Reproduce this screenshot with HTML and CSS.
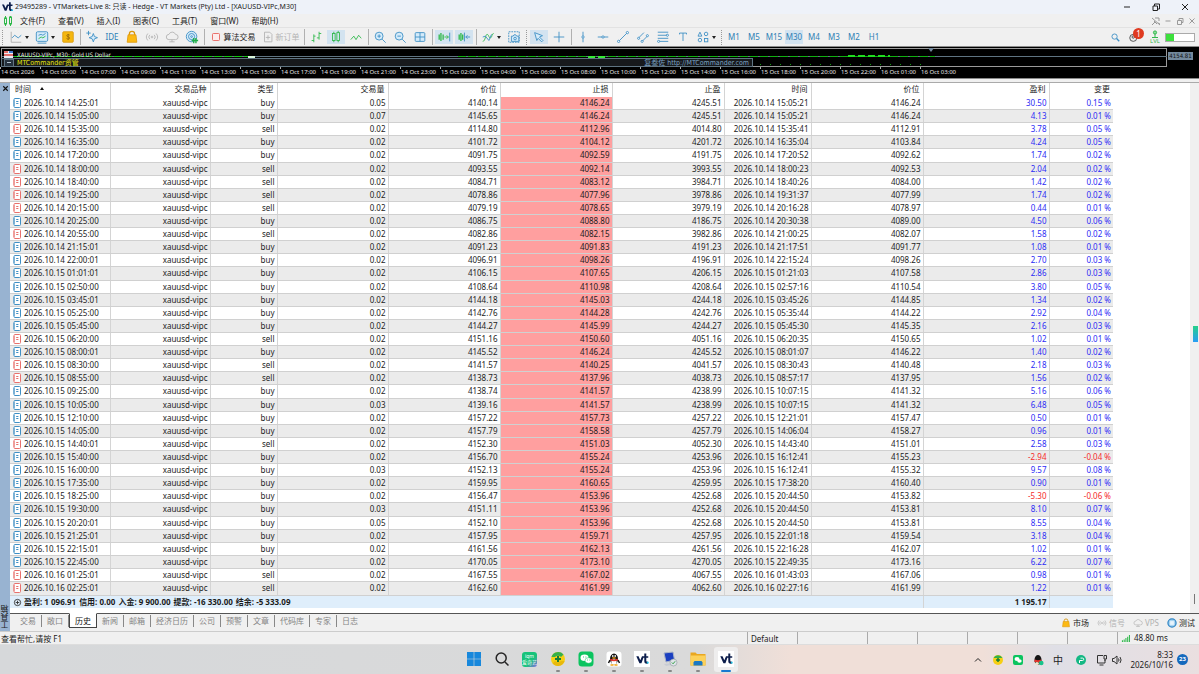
FILE: index.html
```html
<!DOCTYPE html>
<html lang="zh-CN">
<head>
<meta charset="utf-8">
<title>VTMarkets-Live 8</title>
<link rel="stylesheet" href="styles.css">
</head>
<body>
<svg class="defs" aria-hidden="true">
  <symbol id="doc" viewBox="0 0 8 10"><rect x="1" y=".5" width="6.500" height="9" rx="1" fill="#fff" stroke="currentColor"/><path d="M1 2v6" stroke="currentColor" stroke-width="1.400" opacity=".5"/><path d="M3.200 3.500h2.200M3.200 5.500h2.200" stroke="currentColor"/></symbol>
  <symbol id="bag" viewBox="0 0 16 16"><path d="M5 7V4.500a3 3 0 0 1 6 0V7" fill="none" stroke="#d9960c" stroke-width="1.400"/><path d="M3.500 5.500h9l1 8.500h-11z" fill="#fcb913" stroke="#e09c10"/></symbol>
  <symbol id="signal" viewBox="0 0 16 16"><g fill="none" stroke="currentColor"><circle cx="8" cy="8" r="1"/><path d="M5.500 5.500a3.500 3.500 0 0 0 0 5M10.500 5.500a3.500 3.500 0 0 1 0 5M3.300 4a6 6 0 0 0 0 8M12.700 4a6 6 0 0 1 0 8"/></g></symbol>
  <symbol id="cloud" viewBox="0 0 16 16"><path d="M4.500 11a3 3 0 0 1 0-6 4 4 0 0 1 7.500 0 3 3 0 0 1 0 6zM8 11v2.500M5 13.500h6" fill="none" stroke="currentColor"/></symbol>
  <symbol id="vt" viewBox="0 0 24 24"><path d="M2 7h4l3 7 3-7h4V2.500h3.500V7H23v3h-3.500v5c0 1.500 1 2 3 1.600V20c-4.500.800-6.500-.800-6.500-4.500V10h-1.500L11 19.500H7.500z" fill="#0d1e4c"/><path d="M20.500 17h3.300v3h-3.300z" fill="#19c3e6"/></symbol>
</svg>

<header class="titlebar">
  <svg class="i12"><use href="#vt"/></svg>
  <h1>29495289 - VTMarkets-Live 8: 只读 - Hedge - VT Markets (Pty) Ltd - [XAUUSD-VIPc,M30]</h1>
  <div class="winctl">
    <button aria-label="最小化"><svg viewBox="0 0 10 10"><path d="M2 5h6"/></svg></button>
    <button aria-label="还原"><svg viewBox="0 0 10 10"><path d="M2 4h4.500v4.500H2zM3.500 4V2h5v5h-2"/></svg></button>
    <button aria-label="关闭"><svg viewBox="0 0 10 10"><path d="M2 2l6 6M8 2l-6 6"/></svg></button>
  </div>
</header>

<nav class="menubar">
  <svg class="i12" viewBox="0 0 12 12"><g fill="none" stroke="#2eb84a"><path d="M3.500 1v2M3.500 9v2M8.500 1v1M8.500 9v2"/><rect x="2.500" y="3" width="2" height="6"/><rect x="7.500" y="2" width="2" height="7"/></g></svg>
  <button>文件(F)</button><button>查看(V)</button><button>插入(I)</button><button>图表(C)</button><button>工具(T)</button><button>窗口(W)</button><button>帮助(H)</button>
  <div class="childctl">
    <button aria-label="取消固定"><svg viewBox="0 0 10 10"><path d="M1 2l8 7M1 9l3-3M4 2h4v3M3 5l3 3M7 7l2 1"/></svg></button>
    <button aria-label="最小化图表"><svg viewBox="0 0 10 10"><path d="M2.500 5h5"/></svg></button>
    <button aria-label="还原图表"><svg viewBox="0 0 10 10"><path d="M2.500 4.500h4v4h-4zM4 4V2.500h4v4h-1"/></svg></button>
    <button aria-label="关闭图表"><svg viewBox="0 0 10 10"><path d="M2.500 2.500l5 5M7.500 2.500l-5 5"/></svg></button>
  </div>
</nav>

<div class="toolbar">
  <i class="grip lead"></i>
  <button class="combo" aria-label="线形"><svg viewBox="0 0 16 16"><path d="M2.500 2v12H14" stroke="#aaa"/><path d="M3.500 9l3-3 4 3 3.500-3"/></svg><i class="caret"></i></button>
  <button class="combo" aria-label="图表"><svg viewBox="0 0 16 16"><rect x="1.500" y="2" width="13" height="11" rx="1.500" fill="#d5ebfa"/><path d="M4 6l3-1 2 1 3-2M3 15h10"/><path d="M4 10l3-2 2 1 3-2" stroke="#2eb84a"/></svg><i class="caret"></i></button>
  <button aria-label="报价"><svg viewBox="0 0 16 16"><rect x="2" y="2" width="12" height="12" rx="1" fill="#f5b70f" stroke="#d99b12"/><path d="M10 6c-.500-1-3.500-1-3.500.500 0 1.700 3.500 1 3.500 2.700 0 1.500-3.200 1.500-3.800.300M8.200 4.500v7" stroke="#8c5f0a" stroke-width=".8"/></svg></button>
  <i class="sep"></i>
  <button aria-label="向导"><svg viewBox="0 0 16 16"><path d="M9.500 4l1.300 3.500 3.500 1.300-3.500 1.300-1.300 3.500-1.300-3.500-3.500-1.300 3.500-1.300z" fill="#d5ebfa"/><path d="M4 1v5M1.500 3.500h5"/></svg></button>
  <button class="ide">IDE</button>
  <button aria-label="市场"><svg><use href="#bag"/></svg></button>
  <button class="off" aria-label="信号"><svg><use href="#signal"/></svg></button>
  <button class="off" aria-label="VPS"><svg><use href="#cloud"/></svg></button>
  <button aria-label="社区"><svg viewBox="0 0 16 16"><circle cx="7.500" cy="7.500" r="6" fill="#d5ebfa"/><circle cx="7.500" cy="7.500" r="3.500"/><circle cx="7.500" cy="7.500" r="1"/><path d="M10 9v6M7.500 12h7.500M12.500 9v6" stroke="#1fae48" stroke-width="1.600"/></svg></button>
  <i class="sep"></i>
  <button class="wide"><svg viewBox="0 0 16 16"><rect x="4" y="4" width="8" height="8" rx="1" stroke="#e8605a" fill="#fdecec"/></svg>算法交易</button>
  <button class="wide off"><svg viewBox="0 0 16 16"><path d="M4 2.500h6l2.500 2.500v8.500H4zM8 6v5M5.500 8.500h5" stroke="#b4b4b4"/></svg>新订单</button>
  <i class="sep"></i>
  <button aria-label="柱状图"><svg viewBox="0 0 16 16" class="g"><path d="M5.500 5v9M3 12h2.500M5.500 7h2M11.500 2v9M9 9h2.500M11.500 4H14"/></svg></button>
  <button class="on" aria-label="蜡烛图"><svg viewBox="0 0 16 16" class="g"><path d="M5.500 2v2M5.500 12v2M10.500 1v2M10.500 12v2"/><rect x="4" y="4" width="3" height="8"/><rect x="9" y="3" width="3" height="9"/></svg></button>
  <button aria-label="折线图"><svg viewBox="0 0 16 16" class="g"><path d="M2 11l3.500-4 2.500 4 3-5 3 3.500"/></svg></button>
  <i class="sep"></i>
  <button aria-label="放大"><svg viewBox="0 0 16 16"><circle cx="7" cy="7" r="4.500" fill="#d5ebfa"/><path d="M10.500 10.500l4 4M5 7h4M7 5v4"/></svg></button>
  <button aria-label="缩小"><svg viewBox="0 0 16 16"><circle cx="7" cy="7" r="4.500" fill="#d5ebfa"/><path d="M10.500 10.500l4 4M5 7h4"/></svg></button>
  <button aria-label="平铺"><svg viewBox="0 0 16 16"><rect x="2.500" y="3" width="11" height="10" rx="1" fill="#d5ebfa"/><path d="M8 3v10M2.500 8h11"/></svg></button>
  <i class="sep"></i>
  <button class="on" aria-label="自动滚动"><svg viewBox="0 0 16 16"><path d="M2.500 5v6M4.500 3.500v9M7 5v6" stroke="#2eb84a" stroke-width="1.500"/><path d="M8.500 8H13M11 6l2 2-2 2" stroke="#2eb84a"/><path d="M14.500 3v10"/></svg></button>
  <button class="on" aria-label="图表平移"><svg viewBox="0 0 16 16"><path d="M2.500 5v6M4.500 3.500v9M6.500 5v6" stroke="#2eb84a" stroke-width="1.500"/><path d="M8.500 3v10M15 8h-5M12 6l-2 2 2 2"/></svg></button>
  <i class="sep"></i>
  <button class="combo" aria-label="指标"><svg viewBox="0 0 16 16"><path d="M2 13c3 0 3-8 5-8s2 5 4 4 1-5 3.500-5" stroke="#2eb84a"/><path d="M2 8l3-1 4 5 3-7"/></svg><i class="caret"></i></button>
  <button aria-label="截图"><svg viewBox="0 0 16 16"><rect x="2" y="2" width="12" height="12" stroke-dasharray="2 1"/><path d="M5 7h2l1-1.500h2L11 7h2.500v6H5z" fill="#d5ebfa"/><circle cx="9.200" cy="9.800" r="1.500"/></svg></button>
  <i class="grip"></i>
  <button class="on" aria-label="光标"><svg viewBox="0 0 16 16"><path d="M3 3l9 3.500-3.500 1.500 4 4-1.500 1.500-4-4L5.500 12z" fill="#d5ebfa"/></svg></button>
  <button aria-label="十字线"><svg viewBox="0 0 16 16"><path d="M8 2v12M2 8h12"/></svg></button>
  <i class="sep"></i>
  <button aria-label="垂直线"><svg viewBox="0 0 16 16"><path d="M8 2v12"/><circle cx="8" cy="8" r="1.300" fill="#fff"/></svg></button>
  <button aria-label="水平线"><svg viewBox="0 0 16 16"><path d="M2 8h12"/><circle cx="8" cy="8" r="1.300" fill="#fff"/></svg></button>
  <button aria-label="趋势线"><svg viewBox="0 0 16 16"><path d="M3 13L13 3"/><circle cx="3" cy="13" r="1.300" fill="#fff"/><circle cx="13" cy="3" r="1.300" fill="#fff"/></svg></button>
  <button aria-label="通道"><svg viewBox="0 0 16 16"><path d="M3 9l6-6M7 13l6-6"/><circle cx="3" cy="9.500" r="1.200" fill="#fff"/><circle cx="7" cy="13" r="1.200" fill="#fff"/><circle cx="13" cy="6.500" r="1.200" fill="#fff"/></svg></button>
  <button aria-label="斐波那契"><svg viewBox="0 0 16 16"><path d="M2 2.500h12M2 6h12M2 9.500h12M2 13h12"/><circle cx="3" cy="13" r="1.200" fill="#fff"/><circle cx="13" cy="6" r="1.200" fill="#fff"/></svg></button>
  <button aria-label="文本"><svg viewBox="0 0 16 16"><path d="M4 5V3.500h8V5M8 3.500v9"/></svg></button>
  <button class="combo" aria-label="图形"><svg viewBox="0 0 16 16"><path d="M4.500 2.500L6.700 7H2.300z"/><circle cx="11.500" cy="4.500" r="2"/><circle cx="4.500" cy="11.500" r="2"/><rect x="9.700" y="9.700" width="3.800" height="3.800"/></svg><i class="caret"></i></button>
  <i class="grip"></i>
  <button class="tf">M1</button><button class="tf">M5</button><button class="tf">M15</button><button class="tf on">M30</button><button class="tf">M4</button><button class="tf">M3</button><button class="tf">M2</button><button class="tf">H1</button>
  <div class="right">
    <button aria-label="搜索"><svg viewBox="0 0 16 16"><circle cx="7.500" cy="7.500" r="3"/><path d="M9.800 9.800l3 3" stroke-width="1.500"/></svg></button>
    <button class="user" aria-label="账户"><svg viewBox="0 0 16 16"><circle cx="6" cy="9" r="4" stroke="#444"/><circle cx="6" cy="8" r="1.400" stroke="#444"/></svg><b class="badge">1</b></button>
    <button class="lvl" aria-label="LVL"><svg viewBox="0 0 12 8"><circle cx="6" cy="2.500" r="1.600" fill="#8bdc9b" stroke="#2eb84a"/><path d="M6 4v3.500M3 7.500h6" stroke="#2eb84a"/></svg><span>LVL</span></button>
    <div class="meter"><i></i></div>
  </div>
</div>

<section class="chart">
  <svg class="plot" aria-hidden="true">
    <rect x="1.500" y="1.500" width="1165" height="18" fill="none" stroke="#9a9a9a"/>
    <rect x="1.500" y="11.500" width="751" height="8" fill="#17191c" stroke="#5f7482"/>
    <path d="M2 9.500h1165" stroke="#5f7482"/>
    <path d="M4 9.500h246" stroke="#10c810" stroke-dasharray="8 2"/>
    <path d="M248 10h7" stroke="#d9f5d9" stroke-width="2"/>
    <path d="M458 9.500h240" stroke="#10b010" stroke-dasharray="8 2"/>
    <path d="M588 10h18" stroke="#35e835" stroke-width="2" stroke-dasharray="7 3"/>
    <path d="M690 9.500h245" stroke="#10b010" stroke-dasharray="8 2"/>
    <path d="M848 9h42" stroke="#20dc20" stroke-width="2" stroke-dasharray="7 3"/>
    <path d="M760 17.500h162" stroke="#0fa00f" stroke-dasharray="1 9"/>
    <path d="M928 1h6l-3 4z" fill="#73899d"/>
    <rect x="4" y="4" width="9" height="7" fill="#e9eef5"/><path d="M4 5h4M4 8h9" stroke="#e0453f" stroke-width="1.500"/><path d="M9 5h4" stroke="#3f74c9" stroke-width="2"/>
    <rect x="4.500" y="12.500" width="9" height="7" fill="#26323e" stroke="#5f7482"/><path d="M7 15.500h4" stroke="#b4c4d2"/>
  </svg>
  <div class="pane">
    <div class="symbol">XAUUSD-VIPc, M30: Gold US Dollar</div>
    <div class="sub"><span class="ea">MTCommander资管</span><span class="link">复叁佐 http://MTCommander.com</span></div>
    <span class="price">4154.81</span>
  </div>
  <div class="axis" id="axis"></div>
</section>

<main class="toolbox">
  <aside class="side"><button aria-label="关闭工具箱"><svg viewBox="0 0 8 8"><path d="M2 2l4 4M6 2L2 6"/></svg></button><span>工具箱</span></aside>
  <div class="panel">
    <div class="tablewrap">
      <table>
        <colgroup><col class="w100"><col class="w100"><col class="w67"><col class="w111"><col class="w112"><col class="w112"><col class="w112"><col class="w87"><col class="w112"><col class="w126"><col class="w63"></colgroup>
        <thead><tr><th class="first">时间 <i class="up"></i></th><th>交易品种</th><th>类型</th><th>交易量</th><th>价位</th><th>止损</th><th>止盈</th><th>时间</th><th>价位</th><th>盈利</th><th>变更</th></tr></thead>
        <tbody id="rows"></tbody>
        <tfoot><tr><td colspan="9" class="sum"><svg class="plus" viewBox="0 0 10 10"><circle cx="5" cy="5" r="3.500"/><path d="M5 3v4M3 5h4"/></svg><span>盈利: 1 096.91</span><span>信用: 0.00</span><span>入金: 9 900.00</span><span>提款: -16 330.00</span><span>结余: -5 333.09</span></td><td class="total">1 195.17</td><td></td></tr></tfoot>
      </table>
      <div class="scroll"><i class="marker"></i><i class="thumb"></i></div>
    </div>
    <nav class="tabs">
      <button>交易</button><button>敞口</button><button class="active">历史</button><button>新闻</button><button>邮箱</button><button>经济日历</button><button>公司</button><button>预警</button><button>文章</button><button>代码库</button><button>专家</button><button>日志</button>
      <div class="services">
        <button class="strong"><svg><use href="#bag"/></svg>市场</button>
        <button><svg><use href="#signal"/></svg>信号</button>
        <button><svg><use href="#cloud"/></svg>VPS</button>
        <button class="strong"><svg viewBox="0 0 16 16"><circle cx="8" cy="8" r="6.500" fill="#a9d4f0" stroke="#2f86c5" stroke-width="2"/><rect x="5" y="5" width="6" height="6" fill="#e8f4fc"/></svg>测试</button>
      </div>
    </nav>
  </div>
</main>

<footer class="status">
  <span class="help">查看帮忙,请按 F1</span>
  <span class="profile">Default</span><span class="c1"></span><span></span><span></span><span></span><span></span><span></span>
  <span class="ping"><svg viewBox="0 0 10 8"><path d="M1.500 6v2M3.500 5v3M5.500 3.500V8M7.500 2v6M9.500 0v8" stroke="#2eb84a" stroke-width="1.200"/></svg>48.80 ms</span>
</footer>

<div class="taskbar">
  <div class="apps">
    <button aria-label="开始"><svg viewBox="0 0 16 16"><path d="M1 1h6.700v6.700H1zM8.300 1H15v6.700H8.300zM1 8.300h6.700V15H1zM8.300 8.300H15V15H8.300z" fill="#1888dc"/></svg></button>
    <button aria-label="搜索"><svg viewBox="0 0 16 16"><g fill="none" stroke="#262626" stroke-width="1.500"><circle cx="7.200" cy="7" r="5"/><path d="M11 11l3.500 3.500"/></g></svg></button>
    <button class="brand" aria-label="爱奇艺"><span>iqm<br>爱奇艺</span></button>
    <button class="run" aria-label="安全"><svg viewBox="0 0 16 16"><circle cx="8" cy="8" r="7" fill="#f6cf14"/><path d="M1.500 6a7 7 0 0 1 12-2.500L11 6A4 4 0 0 0 5 6z" fill="#35b04a"/><path d="M14.500 10a7 7 0 0 1-12 2.500L5 10a4 4 0 0 0 6 0z" fill="#e8b90c"/><path d="M8 5v6M5 8h6" stroke="#167d34" stroke-width="2"/></svg></button>
    <button class="run" aria-label="微信"><svg viewBox="0 0 16 16"><rect x=".5" y=".5" width="15" height="15" rx="3.500" fill="#0bc45f"/><ellipse cx="6.500" cy="6.800" rx="4" ry="3.300" fill="#fff"/><ellipse cx="10.500" cy="9.500" rx="3.500" ry="2.800" fill="#fff" stroke="#0bc45f" stroke-width=".5"/><path d="M5 6h.8M7.500 6h.8M9.300 9h.7M11.500 9h.7" stroke="#0bc45f"/></svg></button>
    <button class="run" aria-label="QQ"><svg viewBox="0 0 16 16"><rect x=".5" y=".5" width="15" height="15" rx="3" fill="#fff"/><ellipse cx="8" cy="8" rx="4" ry="5.500" fill="#161616"/><path d="M4 9l-1.500 3M12 9l1.500 3" stroke="#161616" stroke-width="1.500"/><ellipse cx="8" cy="11" rx="2.700" ry="2.800" fill="#fff"/><ellipse cx="6.800" cy="5" rx=".8" ry="1" fill="#fff"/><ellipse cx="9.200" cy="5" rx=".8" ry="1" fill="#fff"/><ellipse cx="8" cy="7" rx="2" ry=".7" fill="#f6a616"/><path d="M4.200 8.500c2.500 1.200 5 1.200 7.600 0" stroke="#e3322c" stroke-width="1.500" fill="none"/><path d="M4.500 14h3M8.500 14h3" stroke="#f6a616" stroke-width="1.400"/></svg></button>
    <button class="run" aria-label="VT"><svg class="white" viewBox="-2 -2 28 28"><use href="#vt" width="24" height="24"/></svg></button>
    <button class="run" aria-label="远程"><svg viewBox="0 0 16 16"><path d="M2 2l9-1 1.500 8L4 11z" fill="#1b3fc0" stroke="#a9b4c8"/><path d="M2 13l8-1 2 1.500-8 1.500z" fill="#c8ccd4"/><circle cx="11.500" cy="11.500" r="3.500" fill="#dfe4e8" stroke="#8f979f" stroke-width=".6"/><path d="M9.800 11.500l1.300 1.300 2-2.500" stroke="#35a048" fill="none"/></svg></button>
    <button class="run" aria-label="资源管理器"><svg viewBox="0 0 16 16"><path d="M.5 1.500h5L7 3h8.500v11.500H.5z" fill="#e9a720"/><path d="M.5 4.500h15v10H.5z" fill="#fcd15a"/><path d="M3.500 14.500v-3l1-1.500h7l1 1.500v3z" fill="#1b79c4"/></svg></button>
    <button class="run current" aria-label="VT Markets"><svg class="white" viewBox="-2 -2 28 28"><use href="#vt" width="24" height="24"/></svg></button>
  </div>
  <div class="tray">
    <button aria-label="显示隐藏图标"><svg viewBox="0 0 12 12"><path d="M3 7.500l3-3 3 3" fill="none" stroke="#222"/></svg></button>
    <button aria-label="安全卫士"><svg viewBox="0 0 12 12"><circle cx="6" cy="6" r="5" fill="#f6cf14"/><path d="M1.500 4a5 5 0 0 1 9 0z" fill="#35b04a"/><path d="M6 4v4M4 6h4" stroke="#167d34" stroke-width="1.500"/></svg></button>
    <button aria-label="微信"><svg viewBox="0 0 12 12"><rect x="1" y="1" width="10" height="10" rx="2" fill="#0bc45f"/><ellipse cx="5" cy="5" rx="2.500" ry="2" fill="#fff"/><ellipse cx="7.500" cy="7" rx="2.200" ry="1.800" fill="#fff"/></svg></button>
    <button aria-label="QQ"><svg viewBox="0 0 12 12"><ellipse cx="6" cy="6" rx="3.500" ry="5" fill="#161616"/><path d="M2.500 6.500c2 1 5 1 7 0" stroke="#e3322c" stroke-width="2" fill="none"/><ellipse cx="5" cy="9.500" rx="2" ry="1.500" fill="#f3e3c8"/><circle cx="9.300" cy="9" r="2.300" fill="#19c38b"/></svg></button>
    <button class="ime">中</button>
    <button class="boost" aria-label="加速器"><svg viewBox="0 0 12 12"><circle cx="6" cy="6" r="5" fill="#14b884"/><path d="M4.500 9V6.500h3a1.200 1.200 0 0 0 0-2.400H5.500" stroke="#fff" fill="none"/></svg></button>
    <button class="net" aria-label="网络和音量"><svg viewBox="0 0 28 12"><g fill="none" stroke="#333"><path d="M8 1.500H2.500v7.500H10V6M4.500 11h4M9 1.500h2.500V5H9zM10 5v2"/><path d="M17.500 4.500h1.500l3-2.500v8l-3-2.500h-1.500zM23.500 4.500q1 1.500 0 3M25 3q2.200 3 0 6"/></g></svg></button>
    <div class="clock"><span>8:33</span><span>2026/10/16</span></div>
    <b class="count">23</b>
  </div>
</div>
<script src="script.js"></script>
</body>
</html>
```

FILE: styles.css
```css
* { box-sizing: border-box; }
body {
  margin: 0;
  min-height: 100vh;
  display: flex;
  flex-direction: column;
  font: 8px/12px "Noto Sans", "Noto Sans CJK SC", sans-serif;
  color: #1c1c1c;
  background: #f0f0f0;
  overflow: hidden;
}
button { border: 0; padding: 0; margin: 0; background: none; font: inherit; color: inherit; white-space: nowrap; }
svg { display: block; flex: none; }
.defs { position: absolute; width: 0; height: 0; }
.i12 { width: 12px; height: 12px; }

.titlebar { display: flex; align-items: center; height: 14px; padding: 0 0 0 1px; gap: 2px; background: #eef2f9; }
.titlebar h1 { margin: 0; font-size: 7px; line-height: 14px; font-weight: 400; white-space: nowrap; }
.winctl { display: flex; margin-left: auto; }
.winctl button { width: 29px; display: flex; justify-content: center; }
.winctl svg, .childctl svg { width: 10px; height: 10px; fill: none; stroke: #222; }

.menubar { display: flex; align-items: center; height: 14px; padding-left: 2px; gap: 13px; border-bottom: 1px solid #e2e2e2; }
.menubar > .i12 { margin-right: -7px; }
.childctl { display: flex; margin-left: auto; }
.childctl button { width: 12px; }
.childctl svg { stroke: #999; }

.toolbar { display: flex; align-items: center; height: 18px; background: #f0f0f0; color: #2f7fb5; }
.toolbar button { flex: none; width: 20px; height: 16px; display: flex; align-items: center; justify-content: center; }
.toolbar svg { width: 14px; height: 14px; fill: none; stroke: #3b8ec4; }
.toolbar .g { stroke: #2eb84a; }
.toolbar .combo { width: 26px; gap: 2px; }
.toolbar .wide { width: 52px; color: #222; gap: 1px; }
.toolbar .wide.off { width: 44px; }
.toolbar .off { color: #b4b4b4; }
.toolbar .on { background: #d3e3f0; outline: 1px solid #f0f0f0; outline-offset: -1px; }
.toolbar use { stroke: none; }
.sep { flex: none; width: 4px; height: 16px; background: linear-gradient(90deg, transparent 2px, #b0b0b0 2px, #b0b0b0 3px, transparent 3px); }
.grip { flex: none; width: 5px; height: 16px; background: repeating-linear-gradient(#f0f0f0 0 1px, transparent 1px 2px), linear-gradient(90deg, transparent 2px, #999 2px, #999 3px, transparent 3px); }
.grip.lead { width: 6px; }
.caret { border: 2px solid transparent; border-top: 3px solid #222; border-bottom: 0; width: 4px; }
.right { display: flex; align-items: center; margin-left: auto; padding-right: 4px; }
.user { position: relative; }
.badge { position: absolute; right: 1px; top: -1px; width: 11px; height: 11px; border-radius: 50%; background: #df3a20; color: #fff; font-size: 8px; line-height: 11px; text-align: center; font-weight: 400; }
.toolbar .lvl { flex-direction: column; color: #2eb84a; font-size: 6px; line-height: 6px; }
.lvl svg { width: 12px; height: 8px; }
.meter { width: 30px; height: 9px; background: #fff; border: 1px solid #aaa; }
.meter i { display: block; width: 28%; height: 100%; background: #3ce03c; }

.chart { position: relative; height: 33px; background: #000; border-top: 1px solid #8a8a8a; border-bottom: 1px solid #8a8a8a; }
.plot { position: absolute; inset: 0; width: 100%; height: 20px; }
.pane { position: relative; height: 20px; overflow: hidden; padding: 4px 0 0 17px; color: #e8e8e8; font: 7px/8px "DejaVu Sans Condensed", "Noto Sans CJK SC", sans-serif; }
.symbol { height: 7px; overflow: hidden; font-size: 6px; line-height: 7px; }
.sub { display: flex; justify-content: space-between; width: 732px; padding-top: 1px; font-size: 7px; }
.ea { color: #e6e610; }
.link { color: #7ba3c4; }
.price { position: absolute; right: 6px; top: 5px; width: 25px; background: #73899d; color: #111; font-size: 6px; text-align: center; }
.axis { display: flex; padding-left: 0; color: #e4e4e4; font: 6px/10px "Noto Sans", sans-serif; }
.axis span { flex: none; width: 40px; white-space: nowrap; border-left: 1px solid transparent; border-image: linear-gradient(#aaa 3px, transparent 3px) 1; }

.toolbox { flex: 1; min-height: 0; display: flex; margin-top: 3px; border-top: 1px solid #aaa; }
.side { width: 10px; flex: none; display: flex; flex-direction: column; justify-content: space-between; align-items: center; background: #98b3d1; }
.side svg { width: 9px; height: 11px; stroke: #111; }
.side span { writing-mode: vertical-rl; transform: rotate(180deg); line-height: 10px; padding-top: 2px; }
.panel { flex: 1; min-width: 0; display: flex; flex-direction: column; }
.tablewrap { flex: 1; min-height: 0; display: flex; align-items: stretch; justify-content: space-between; background: #fff; padding-bottom: 5px; }
table { width: 1103px; height: 100%; border-collapse: collapse; table-layout: fixed; line-height: 12px; }
.w100 { width: 100px; } .w67 { width: 67px; } .w111 { width: 111px; } .w112 { width: 112px; }
.w87 { width: 87px; } .w126 { width: 126px; } .w63 { width: 64px; }
th, td { padding: 0 2px 0 0; text-align: right; white-space: nowrap; border-right: 1px solid #d4d4d4; font-weight: 400; }
th { height: 14px; padding-right: 3px; vertical-align: top; }
th:last-child, td:last-child { border-right: 0; }
th.first { text-align: left; padding-left: 5px; }
.up { display: inline-block; margin-left: 7px; vertical-align: 2px; border: 2px solid transparent; border-bottom: 3px solid #111; border-top: 0; }
tbody td { border-bottom: 1px solid #d0d0d0; }
tbody tr:nth-child(even) { background: #ebebeb; }
tbody tr td.sl { background: #ff9f9f; }
.time { display: flex; align-items: center; gap: 3px; padding-left: 3px; }
.time svg { width: 8px; height: 10px; color: #3f8fc4; }
.time .sell { color: #e8706c; }
.gain { color: #2b2bf5; }
.loss { color: #f52b2b; }
tfoot tr { background: #dfeefb; font-weight: 700; height: 13px; }
tfoot td { font-weight: 700; }
td.sum { text-align: left; padding-left: 3px; }
.sum svg { display: inline-block; vertical-align: -2px; width: 9px; height: 9px; margin-right: 2px; fill: none; stroke: #333; }
.sum span { margin-right: 3px; }
.scroll { position: relative; width: 9px; flex: none; margin-bottom: -5px; background: #f0f0f0; }
.marker { position: absolute; right: 1px; top: 243px; width: 5px; height: 16px; background: linear-gradient(#25d08a, #2a9df5); }
.thumb { position: absolute; right: 4px; bottom: 9px; width: 1px; height: 10px; background: #777; }

.tabs { display: flex; height: 18px; padding-left: 5px; border-top: 1px solid #555; color: #858585; }
.tabs > button { height: 14px; padding: 0 5px; border-right: 1px solid transparent; border-image: linear-gradient(transparent 2px, #888 2px, #888 12px, transparent 12px) 1; }
.tabs > button:nth-child(12) { border-image: none; }
.tabs > .active { border: 1px solid #444; border-image: none; border-top-color: #fff; background: #fff; color: #111; margin-top: -1px; height: 15px; }
.services { display: flex; margin-left: auto; align-items: center; padding-right: 4px; gap: 8px; color: #b0b0b0; }
.services button { display: flex; align-items: center; gap: 2px; }
.services svg { width: 10px; height: 10px; }
.services .strong { color: #222; }

.status { display: flex; height: 14px; line-height: 14px; border-top: 1px solid #ccc; border-bottom: 1px solid #ddd; }
.status span { width: 50px; border-left: 1px solid #aaa; }
.status .help { flex: 1; width: auto; border: 0; padding-left: 1px; }
.status .profile { padding-left: 3px; }
.status .c1 { width: 70px; }
.status .ping { display: flex; align-items: center; gap: 4px; width: 82px; padding-left: 3px; }
.ping svg { width: 9px; height: 7px; }

.taskbar { height: 29px; display: grid; grid-template-columns: 1fr auto 1fr; align-items: center; background: linear-gradient(90deg, #d6d8da 0%, #dadada 58%, #f0dfd8 66%, #f0dfd8 82%, #dfdfe6 88%, #eadfe0 100%); }
.apps { grid-column: 2; display: flex; gap: 4px; }
.apps button { position: relative; width: 24px; height: 25px; display: flex; align-items: center; justify-content: center; padding-bottom: 1px; border-radius: 3px; }
.apps button > svg { width: 16px; height: 16px; }
.apps .white { background: #fff; }
.apps .current { background: #eeeded; }
.run::after { content: ""; position: absolute; bottom: 0; width: 4px; height: 2px; border-radius: 1px; background: #888; }
.current::after { width: 10px; background: #1779d0; }
.brand span { width: 15px; height: 15px; border-radius: 3px; background: linear-gradient(135deg, #17c37b 60%, #8a6be8); color: #fff; font-size: 5px; line-height: 6px; padding-top: 1px; text-align: center; overflow: hidden; }
.tray { grid-column: 3; justify-self: end; display: flex; align-items: center; gap: 8px; padding-right: 11px; }
.tray svg { width: 12px; height: 12px; }
.ime { width: 12px; font-size: 10px; color: #222; }
.boost { margin-left: 3px; }
.net svg { width: 28px; }
.clock { display: flex; flex-direction: column; align-items: flex-end; line-height: 10px; width: 42px; }
.count { width: 11px; height: 11px; margin-left: -4px; border-radius: 50%; background: #1569bd; color: #fff; font-size: 6px; line-height: 11px; text-align: center; }
```

FILE: script.js
```javascript
const ticks = ["14 Oct 2026", "14 Oct 05:00", "14 Oct 07:00", "14 Oct 09:00", "14 Oct 11:00", "14 Oct 13:00", "14 Oct 15:00", "14 Oct 17:00", "14 Oct 19:00", "14 Oct 21:00", "14 Oct 23:00", "15 Oct 02:00", "15 Oct 04:00", "15 Oct 06:00", "15 Oct 08:00", "15 Oct 10:00", "15 Oct 12:00", "15 Oct 14:00", "15 Oct 16:00", "15 Oct 18:00", "15 Oct 20:00", "15 Oct 22:00", "16 Oct 01:00", "16 Oct 03:00"];
document.getElementById("axis").innerHTML = ticks.map(t => `<span>${t}</span>`).join("");

// open time | side | volume | price | stop loss | take profit | close time | close price | profit | change
const deals = `14 14:25:01|buy|0.05|4140.14|4146.24|4245.51|14 15:05:21|4146.24|30.50|0.15
14 15:05:00|buy|0.07|4145.65|4146.24|4245.51|14 15:05:21|4146.24|4.13|0.01
14 15:35:00|sell|0.02|4114.80|4112.96|4014.80|14 15:35:41|4112.91|3.78|0.05
14 16:35:00|buy|0.02|4101.72|4104.12|4201.72|14 16:35:04|4103.84|4.24|0.05
14 17:20:00|buy|0.02|4091.75|4092.59|4191.75|14 17:20:52|4092.62|1.74|0.02
14 18:00:00|sell|0.02|4093.55|4092.14|3993.55|14 18:00:23|4092.53|2.04|0.02
14 18:40:00|sell|0.02|4084.71|4083.12|3984.71|14 18:40:26|4084.00|1.42|0.02
14 19:25:00|sell|0.02|4078.86|4077.96|3978.86|14 19:31:37|4077.99|1.74|0.02
14 20:15:00|sell|0.02|4079.19|4078.65|3979.19|14 20:16:28|4078.97|0.44|0.01
14 20:25:00|buy|0.02|4086.75|4088.80|4186.75|14 20:30:38|4089.00|4.50|0.06
14 20:55:00|sell|0.02|4082.86|4082.15|3982.86|14 21:00:25|4082.07|1.58|0.02
14 21:15:01|buy|0.02|4091.23|4091.83|4191.23|14 21:17:51|4091.77|1.08|0.01
14 22:00:01|buy|0.02|4096.91|4098.26|4196.91|14 22:15:24|4098.26|2.70|0.03
15 01:01:01|buy|0.02|4106.15|4107.65|4206.15|15 01:21:03|4107.58|2.86|0.03
15 02:50:00|buy|0.02|4108.64|4110.98|4208.64|15 02:57:16|4110.54|3.80|0.05
15 03:45:01|buy|0.02|4144.18|4145.03|4244.18|15 03:45:26|4144.85|1.34|0.02
15 05:25:00|buy|0.02|4142.76|4144.28|4242.76|15 05:35:44|4144.22|2.92|0.04
15 05:45:00|buy|0.02|4144.27|4145.99|4244.27|15 05:45:30|4145.35|2.16|0.03
15 06:20:00|sell|0.02|4151.16|4150.60|4051.16|15 06:20:35|4150.65|1.02|0.01
15 08:00:01|buy|0.02|4145.52|4146.24|4245.52|15 08:01:07|4146.22|1.40|0.02
15 08:30:00|sell|0.02|4141.57|4140.25|4041.57|15 08:30:43|4140.48|2.18|0.03
15 08:55:00|sell|0.02|4138.73|4137.96|4038.73|15 08:57:17|4137.95|1.56|0.02
15 09:25:00|buy|0.02|4138.74|4141.57|4238.99|15 10:07:15|4141.32|5.16|0.06
15 10:05:00|buy|0.03|4139.16|4141.57|4238.99|15 10:07:15|4141.32|6.48|0.05
15 12:10:00|buy|0.02|4157.22|4157.73|4257.22|15 12:21:01|4157.47|0.50|0.01
15 14:05:00|buy|0.02|4157.79|4158.58|4257.79|15 14:06:04|4158.27|0.96|0.01
15 14:40:01|sell|0.02|4152.30|4151.03|4052.30|15 14:43:40|4151.01|2.58|0.03
15 15:40:00|buy|0.02|4156.70|4155.24|4253.96|15 16:12:41|4155.23|-2.94|-0.04
15 16:00:00|buy|0.03|4152.13|4155.24|4253.96|15 16:12:41|4155.32|9.57|0.08
15 17:35:00|buy|0.02|4159.95|4160.65|4259.95|15 17:38:20|4160.40|0.90|0.01
15 18:25:00|buy|0.02|4156.47|4153.96|4252.68|15 20:44:50|4153.82|-5.30|-0.06
15 19:30:00|buy|0.03|4151.11|4153.96|4252.68|15 20:44:50|4153.81|8.10|0.07
15 20:20:01|buy|0.05|4152.10|4153.96|4252.68|15 20:44:50|4153.81|8.55|0.04
15 21:25:01|buy|0.02|4157.95|4159.71|4257.95|15 22:01:18|4159.54|3.18|0.04
15 22:15:01|buy|0.02|4161.56|4162.13|4261.56|15 22:16:28|4162.07|1.02|0.01
15 22:45:00|buy|0.02|4170.05|4173.10|4270.05|15 22:49:35|4173.16|6.22|0.07
16 01:25:01|sell|0.02|4167.55|4167.02|4067.55|16 01:43:03|4167.06|0.98|0.01
16 02:25:01|sell|0.02|4162.60|4161.99|4062.60|16 02:27:16|4161.99|1.22|0.01`;

document.getElementById("rows").innerHTML = deals.split("\n").map(line => {
  const [open, side, vol, price, sl, tp, close, closePrice, profit, change] = line.split("|");
  const tone = profit.startsWith("-") ? "loss" : "gain";
  return `<tr><td><div class="time"><svg class="${side}"><use href="#doc"/></svg>2026.10.${open}</div></td><td>xauusd-vipc</td><td>${side}</td><td>${vol}</td><td>${price}</td><td class="sl">${sl}</td><td>${tp}</td><td>2026.10.${close}</td><td>${closePrice}</td><td class="${tone}">${profit}</td><td class="${tone}">${change} %</td></tr>`;
}).join("");
```
